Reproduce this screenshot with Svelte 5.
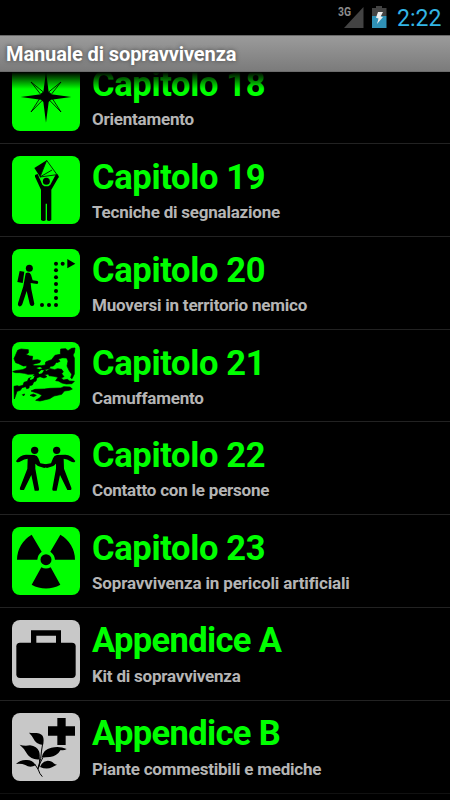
<script>
  const rows = [
    { title: 'Capitolo 18', sub: 'Orientamento', icon: 'compass', h: 93 },
    { title: 'Capitolo 19', sub: 'Tecniche di segnalazione', icon: 'signal', h: 93 },
    { title: 'Capitolo 20', sub: 'Muoversi in territorio nemico', icon: 'hike', h: 93 },
    { title: 'Capitolo 21', sub: 'Camuffamento', icon: 'camo', h: 92 },
    { title: 'Capitolo 22', sub: 'Contatto con le persone', icon: 'people', h: 93 },
    { title: 'Capitolo 23', sub: 'Sopravvivenza in pericoli artificiali', icon: 'nuclear', long: true, h: 93 },
    { title: 'Appendice A', sub: 'Kit di sopravvivenza', icon: 'kit', grey: true, h: 93 },
    { title: 'Appendice B', sub: 'Piante commestibili e mediche', icon: 'plant', grey: true, h: 93 }
  ];
  const trail = [[102,180],[123,180],[144,180],[144,159],[144,138],[144,117],[144,97],[144,76],[144,56],[164,56]];
  const figure = 'M25 92q10-17 29-18l25 1q9 1 12 10l6 15 17 3v9l-5 2-17-5q-5-1-8-6l-2-2v15l11 60q1 6-3 6H80l-10-47-22 45h-10q-4-2-2-7l22-57 1-30q-11 1-19 7-9 5-14 3-3-2-1-5z';
</script>

<div class="screen">
  <header class="status">
    <svg class="signal" width="27" height="24" viewBox="0 0 27 24">
      <path d="M25.500 2v21H6z" fill="#434343" />
      <text x="0" y="11" class="net" textLength="13" lengthAdjust="spacingAndGlyphs">3G</text>
    </svg>
    <svg class="battery" width="15" height="22" viewBox="0 0 15 22">
      <path d="M4 0h6v2h4.500v8H0V2h4z" fill="#434343" />
      <path d="M0 10h14.500v12H0z" fill="#2f91b6" />
      <path d="M6 6h5L8.700 10.500l2.300 .5-6 7 1.500-5.500L4 11.800z" fill="#eee" />
    </svg>
    <span class="clock">2:22</span>
  </header>
  <div class="titlebar"><h1>Manuale di sopravvivenza</h1></div>
  <main class="viewport">
    <ul>
      {#each rows as row}
        <li style="height: {row.h}px">
          <svg class="icon" class:grey={row.grey} width="68" height="68" viewBox={row.icon === 'compass' ? '12 -13 204 204' : '12 12 204 204'}>
            {#if row.icon === 'compass'}
              <g fill="none" stroke="#000" stroke-width="2.500">
                <path d="M69 44l37 30-8 7zM159 44l-37 30 8 7zM69 134l37-38-8-7zM159 134l-37-38 8-7z" />
              </g>
              <path d="M114 12l8 62 7 7 61 8-61 8-7 7-8 62-8-62-7-7-61-8 61-8 7-7z" />
            {:else if row.icon === 'signal'}
              <path d="M116 25L79 48l17 26z" />
              <path d="M116 25l31 43-51 7zM96 75l36-21" fill="none" stroke="#000" stroke-width="2.500" />
              <circle cx="115" cy="88" r="10.500" />
              <path d="M81 69l8-3 14 32 6 5h12l6-5 16-30 6-1 4 8-3 4-20 34v91q-6 5-13 1v-50h-4v50q-7 4-14-1v-91L81 74z" />
            {:else if row.icon === 'hike'}
              <circle cx="64" cy="70" r="10.500" />
              <path d="M35 78l14 2-5 34-16-3z" />
              <path d="M53 85q10-7 16 4l5 17 15 2q4 6-1 9l-20-3 2 19 9 43q-1 8-8 7-5-1-6-7l-9-38-13 40q-3 8-10 6-5-3-3-9l16-51z" />
              {#each trail as [x, y]}<circle cx={x} cy={y} r="6" />{/each}
              <path d="M178 42l24 14-24 14z" />
            {:else if row.icon === 'camo'}
              <g transform="translate(12 12)">
                <g stroke="#000" stroke-width="2">
                  <path d="M17 25l10-4 22 2v10l-8 4 12 5 9 1-2 12 17-2 9 3-3 6-13 3-10 3 8 3 20 0 12-2 1-9 7-3 11-4 10-13 15-3 14-1-5 10-14 6 5 6-11 5-9 9-9 1-3 7-8 2-8 1 7 4 18-2 15 2 2 5-10 2-12-1-6 3-13 2 8 6-9 4-12-4-9 3-3 10-7 3-4 9-9 2-1 7-7 2-3-6-11 3-5 8-10 3-4 12-4 11-1-38 10-2 5 2 12-3 3-9 10-3 4-9 10-3 8-10-20 1-11-3-14-2-12 0-9-3 8-3 21-3 11-4 3-8-11 1-14-7-9-3-5-12 4-9z" />
                  <path d="M146 21l15-1 7 6 11-7 10-1-2 14-4 7 4 9v48l-7 14-4-3 3-10-8-12-6-13 3-15-4-9-17-1-9-5 10-3-3-6z" />
                  <path d="M106 86l8-6 14 3 9-3 12 2 5 8-5 5 7 9-9 4 8 6 11-2 7 5 14 1-7 7-17 1-13-3-11-6-8-1 7-10-12-3-15-2z" />
                  <path d="M69 142l28-1 17-2 33-1 8-4 19 1 7 6-9 4-15 2-8 10-23 5-13 8-29 7-13-2 12-8 7-7-12-6-10-3-11-4z" />
                  <path d="M54 160l10-4 9 4-8 4zM31 158l7-2-3 6z" />
                </g>
                <g fill="#0f0">
                  <path d="M53 111l9-9 6-1-4 9-8 4zM79 92l9-8 8 1-6 9-8 2zM73 78l11-3 7 4-9 3z" />
                  <circle cx="152" cy="70" r="3" /><circle cx="134" cy="65" r="3" />
                </g>
              </g>
            {:else if row.icon === 'people'}
              <circle cx="80" cy="61" r="11" />
              <circle cx="146" cy="61" r="11" />
              <path d={figure} />
              <path d={figure} transform="translate(226 0) scale(-1 1)" />
            {:else if row.icon === 'nuclear'}
              <circle cx="114" cy="110" r="16.500" />
              <path d="M27 110A87 87 0 0 1 71 35L101 86Q89 95 88 110zM201 110A87 87 0 0 0 157 35L127 86Q140 95 141 110zM71 185A87 87 0 0 0 157 185L128 133Q114 140 100 133z" />
            {:else if row.icon === 'kit'}
              <path d="M69 84V43h90v41M85 81h59V59H85z" fill-rule="evenodd" />
              <rect x="25" y="80" width="178" height="106" rx="11" />
            {:else}
              <path d="M148 27h25v25h28v28h-28v28h-25V80h-28V52h28z" />
              <path d="M63 71q10 2 23 1 17 2 20 14 2 10-1 22-22-3-28-18-4-9-14-19zM35 107q14 5 31 2 21 3 27 18 4 10 1 24-25 2-36-15-8-17-23-29zM101 146q5-26 29-30 24-6 46 4-8 5-18 3-11 18-32 21-13 1-25 2zM96 174q6-17 23-19 13 0 18 8 4 4 10 4-8 4-15 8-16 8-36-1zM24 165q13-13 31-12 19-1 28 16-17 9-31-1-12-5-28-3z" />
              <path d="M104 104q-4 22-6 45l-8 28M93 145q5 16 0 28M80 165l11 17q3 12 12 21M90 181q5-20 14-34" fill="none" stroke="#000" stroke-width="3" />
            {/if}
          </svg>
          <div class="copy">
            <h2 class:appendix={row.grey}>{row.title}</h2>
            <p class:long={row.long}>{row.sub}</p>
          </div>
        </li>
      {/each}
    </ul>
  </main>
</div>

<style>
  :global(body) { background: #000; }
  .screen {
    width: 450px; height: 800px; overflow: hidden; background: #000;
    display: flex; flex-direction: column;
    font-family: Roboto, "Liberation Sans", sans-serif;
  }
  .status { height: 35px; flex: none; display: flex; justify-content: flex-end; padding-right: 9px; }
  .signal { margin: 5px 7px 0 0; }
  .net { font-size: 12.500px; font-weight: 700; fill: #8c8c8c; }
  .battery { margin: 6px 10px 0 0; }
  .clock { width: 44px; font-size: 23px; line-height: 37px; color: #33b5e5; white-space: nowrap; }
  .titlebar {
    height: 37px; box-sizing: border-box; flex: none; padding-left: 6px;
    border-top: 1px solid #686868; border-bottom: 1px solid #6c6c6c;
    background: linear-gradient(#9b9b9b, #7b7b7b);
  }
  h1 {
    margin: 0; font-size: 20px; line-height: 37px; font-weight: 700; color: #fff;
    letter-spacing: -.1px; white-space: nowrap; text-shadow: 0 0 4px #444;
  }
  .viewport { flex: 1; min-height: 0; overflow: hidden; position: relative; }
  .viewport::before {
    content: ''; position: absolute; left: 0; right: 0; top: 0; height: 17px;
    background: linear-gradient(#000, transparent); z-index: 1;
  }
  ul { list-style: none; margin: -21px 0 0; padding: 0; }
  li { box-sizing: border-box; display: flex; padding: 12px 12px 0; gap: 12px; border-bottom: 1px solid #222; }
  li:last-child { border-bottom-color: #111; }
  .icon { flex: none; border-radius: 8px; background: #0f0; }
  .icon.grey { background: #c8c8c8; }
  h2 { margin: 0; padding-top: 1px; font-size: 34.500px; line-height: 40px; font-weight: 700; color: #0f0; letter-spacing: -.35px; white-space: nowrap; }
  h2.appendix { margin-top: -1px; padding-bottom: 1px; letter-spacing: -.65px; }
  p { margin: 5px 0 0; font-size: 17px; line-height: 20px; font-weight: 700; color: #b5b5b5; letter-spacing: -.22px; white-space: nowrap; }
  p.long { letter-spacing: -.14px; }
</style>
